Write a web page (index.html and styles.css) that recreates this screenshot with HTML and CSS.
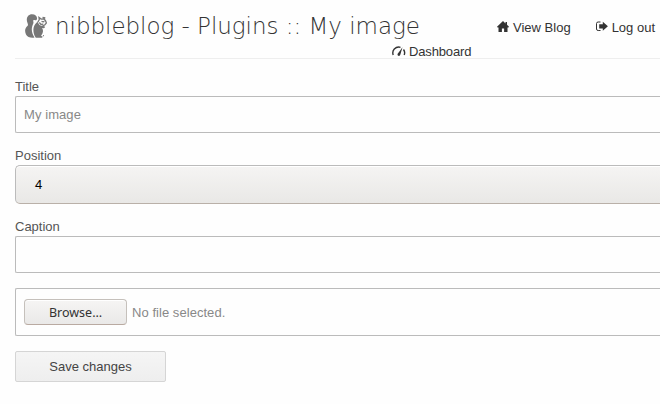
FILE: index.html
```
<!DOCTYPE html>
<html lang="en">
<head>
<meta charset="utf-8">
<title>nibbleblog - Plugins :: My image</title>
<link rel="stylesheet" href="styles.css">
</head>
<body>
<header class="header">
  <div class="topline">
    <svg class="logo" viewBox="0 0 22 24"><path d="M2.500 9C.6 4.500 2.700.2 7 .2c3.500 0 5.400 2.300 5 4.800-.3 1.400-1.500 1.300-2.400 1-1.100-.3-1.700.5-1.300 1.600.5 1.600-.3 2.500-1 4.400-1.200 3.700-.2 8.300 2.200 11.600C6 24.300 2.500 23.300 1 20.500-.6 17.200 0 14 2.400 12c.8-.8.700-1.700.1-3z"/><path d="M8.400 15.500c.1-3 1.300-4.700 2.800-6.500l1.300-1.300c1 1.600 1.700 3.500 3.700 4l3.300.6.600 1-1.300 1-1.700-.2c1.500 2.300 1 5-.4 6.700l-.7 1.100 1.500.4-.3 1.400h-6.400C9.200 21.700 8.300 18.500 8.400 15.500z"/><circle cx="18.500" cy="21.700" r=".6"/><path class="ear" d="M12.800 8.200L14.300 5.600 14 3.400l2.200 1.700L19 5M19 5l1.500 1.700L21.400 9 19.700 11l-2.400 1M14.300 8.500l1.700 2 2.300-.3M16.500 7.300l1.700.6 1.200-.6M17.500 3.500L20.300 4"/></svg>
    <h1>nibbleblog - Plugins :: My image</h1>
    <nav class="nav">
      <a><svg class="icon" viewBox="0 0 12 12"><path d="M6 0L0 5.700l.6.800H1.500V11h3.400V7.500h2.200V11h3.400V6.500h.9l.6-.8-2-1.900V1H8.500v1.400z"/></svg>View Blog</a>
      <a><svg class="icon" viewBox="0 0 12 12"><path class="thin" d="M4.500 1H2.200Q.5 1 .5 2.500v5.500Q.5 9.500 2.200 9.500h2.300"/><path d="M3.200 3.200h3.600V.7L11.900 5.200 6.800 9.800V7.400H3.200z"/></svg>Log out</a>
    </nav>
  </div>
  <nav class="subnav"><a><svg class="gauge" viewBox="0 0 14 12"><path class="line" d="M1.200 9Q0 5.500 2.300 3 5 .3 8.500 1.300M11.500 3.500Q13.400 6 12.200 9"/><path d="M10.500 1.300L8.200 8.900Q7.300 10.500 5.900 9.600 5 8.700 5.900 7.400z"/></svg>Dashboard</a></nav>
</header>
<main class="form">
  <label>Title</label>
  <div class="field">My image</div>
  <label>Position</label>
  <div class="select">4</div>
  <label>Caption</label>
  <div class="field"></div>
  <div class="file"><button class="browse">Browse…</button><span>No file selected.</span></div>
  <button class="save">Save changes</button>
</main>
</body>
</html>
```
FILE: styles.css
```
* { box-sizing: border-box; }
html { overflow: hidden; }
body {
  margin: 0;
  padding: 0 0 0 15px;
  height: 404px;
  overflow: hidden;
  background: #fefefe;
  color: #555;
  font: 13px/18px "Liberation Sans", Arial, sans-serif;
}
.header { height: 59px; border-bottom: 1px solid #eee; color: #333; }
.topline { display: flex; height: 42px; padding-left: 10px; }
.logo { width: 22px; height: 24px; margin-top: 14px; fill: #777; flex: none; }
.logo .ear { fill: none; stroke: #777; stroke-width: 1.3; }
h1 {
  margin: 10px 0 0 8px;
  width: 375px;
  flex: none;
  font: 200 23px/32px "DejaVu Sans Light", "DejaVu Sans", sans-serif;
  letter-spacing: -.03px;
  white-space: nowrap;
}
.nav { display: flex; gap: 25px; margin: 19px 0 0 auto; padding-right: 5px; }
.nav a, .subnav a { display: flex; white-space: nowrap; }
.icon { width: 12px; height: 12px; margin: 2px 4px 0 0; fill: #333; }
.gauge { width: 14px; height: 12px; margin: 3px 3px 0 0; fill: #333; }
.line { fill: none; stroke: #333; stroke-width: 1.4; }
.thin { fill: none; stroke: #333; stroke-width: 1; }
.subnav { padding: 1px 0 0 377px; letter-spacing: -.15px; }
.form { padding-top: 19px; }
label { display: block; height: 18px; }
.field {
  height: 37px;
  margin-bottom: 14px;
  padding: 9px 8px;
  border: 1px solid #bbb;
  border-right: 0;
  border-radius: 2px 0 0 2px;
  color: #888;
  letter-spacing: .08px;
}
.select {
  height: 39px;
  margin-bottom: 14px;
  padding: 10px 19px;
  border: 1px solid #bbb;
  border-right: 0;
  border-bottom-color: #b9b0a8;
  border-radius: 5px 0 0 5px;
  background: linear-gradient(#f5f4f3, #e9e8e6);
  box-shadow: inset 0 1px #fff;
  color: #000;
}
.file {
  display: flex;
  align-items: center;
  gap: 5px;
  height: 48px;
  margin: 15px 0;
  padding: 0 8px;
  border: 1px solid #bbb;
  border-right: 0;
  border-radius: 2px 0 0 2px;
  color: #888;
}
.file span { padding-top: 2px; letter-spacing: .05px; }
.browse {
  width: 103px;
  height: 26px;
  padding: 2px 0 0;
  border: 1px solid #c5c0bb;
  border-bottom-color: #b9aaa1;
  border-radius: 4px;
  background: linear-gradient(#f6f5f4, #eae9e8);
  box-shadow: inset 0 1px #fff;
  color: #333;
  font: 12.5px/22px "Noto Sans", sans-serif;
}
.save {
  display: block;
  width: 151px;
  height: 31px;
  padding: 0;
  border: 1px solid #d5d5d5;
  border-radius: 2px;
  background: linear-gradient(#f5f5f5, #eee);
  color: #444;
  font: inherit;
}
```
